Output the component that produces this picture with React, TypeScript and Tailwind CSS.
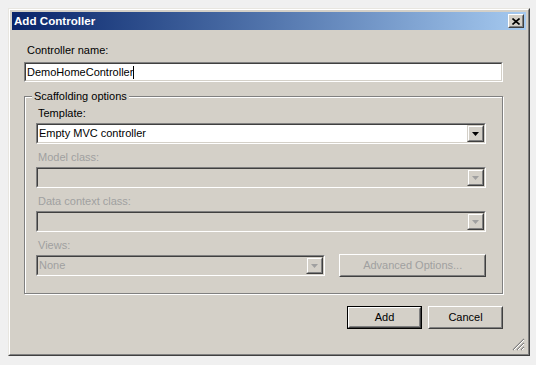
import React from "react";

const font = { fontFamily: '"Liberation Sans", Arial, sans-serif' };

function Sunken({ className, children, disabled }: { className?: string; children?: React.ReactNode; disabled?: boolean }) {
  return (
    <div className={`border border-t-[#808080] border-l-[#808080] border-b-white border-r-white ${className ?? ""}`}>
      <div className={`h-full border border-t-[#404040] border-l-[#404040] border-b-[#d4d0c8] border-r-[#d4d0c8] ${disabled ? "bg-[#d4d0c8]" : "bg-white"}`}>
        {children}
      </div>
    </div>
  );
}

function Arrow({ disabled }: { disabled?: boolean }) {
  return (
    <div className="w-[17px] h-full border border-t-[#d4d0c8] border-l-[#d4d0c8] border-b-[#404040] border-r-[#404040] bg-[#d4d0c8]">
      <div className="h-full border border-t-white border-l-white border-b-[#808080] border-r-[#808080] flex items-center justify-center">
        <svg width="7" height="4" viewBox="0 0 7 4">
          <path d="M0 0H7L3.5 4Z" fill={disabled ? "#a0a0a0" : "#000"} />
        </svg>
      </div>
    </div>
  );
}

function Combo({ text, disabled, className }: { text?: string; disabled?: boolean; className?: string }) {
  return (
    <Sunken className={className} disabled={disabled}>
      <div className="flex h-full items-stretch">
        <div className={`flex-1 flex items-center pl-[1px] text-[11px] ${disabled ? "text-[#a0a0a0]" : "text-black"}`}>{text}</div>
        <Arrow disabled={disabled} />
      </div>
    </Sunken>
  );
}

function Button({ label, def, disabled, className, children }: { label?: string; def?: boolean; disabled?: boolean; className?: string; children?: React.ReactNode }) {
  return (
    <div className={`${def ? "border border-black" : ""} ${className ?? ""}`}>
      <div className="h-full border border-t-white border-l-white border-b-[#404040] border-r-[#404040] bg-[#d4d0c8]">
        <div className={`h-full border border-t-[#d4d0c8] border-l-[#d4d0c8] border-b-[#808080] border-r-[#808080] flex items-center justify-center text-[11px] ${disabled ? "text-[#a0a0a0]" : "text-black"}`}>
          {label}
          {children}
        </div>
      </div>
    </div>
  );
}

function Label({ children, disabled, className }: { children: React.ReactNode; disabled?: boolean; className?: string }) {
  return (
    <div className={`h-[14px] leading-[14px] text-[11px] pl-[2px] ${disabled ? "text-[#a0a0a0]" : "text-black"} ${className ?? ""}`}>
      {children}
    </div>
  );
}

export default function App() {
  return (
    <div className="w-[536px] h-[365px] bg-[#f0f0f0] pt-[8px] pl-[8px]" style={font}>
      <div className="w-[522px] h-[348px] border border-t-[#e8e6e0] border-l-[#e8e6e0] border-b-[#404040] border-r-[#404040] bg-[#d4d0c8] flex flex-col">
        <div className="flex-1 border border-t-white border-l-white border-b-[#808080] border-r-[#808080] p-[2px] flex flex-col">
          <div className="h-[18px] bg-gradient-to-r from-[#0a246a] to-[#a6caf0] flex items-center justify-between pl-[2px] pr-[2px]">
            <span className="text-white font-bold text-[11.6px]">Add Controller</span>
            <Button className="w-[16px] h-[14px]">
              <svg width="8" height="7" viewBox="0 0 8 7">
                <path d="M0.5 0.5L7.5 6.5M7.5 0.5L0.5 6.5" stroke="#000" strokeWidth="1.6" />
              </svg>
            </Button>
          </div>
          <div className="relative flex-1 flex flex-col pl-[12px] pr-[23px]">
            <Label className="mt-[13px] pl-[3px]">Controller name:</Label>
            <Sunken className="mt-[5px] h-[20px]">
              <div className="h-full flex items-center pl-[1px] text-[11px] text-black">
                DemoHomeController<span className="inline-block w-[1px] h-[13px] bg-black" />
              </div>
            </Sunken>
            <div className="relative mt-[14px] h-[198px] border border-[#808080] shadow-[inset_1px_1px_0_white,1px_1px_0_white] pl-[11px] pr-[16px] flex flex-col">
              <div className="absolute -top-[8px] left-[7px] bg-[#d4d0c8] px-[2px] h-[14px] leading-[14px] text-[11px]">Scaffolding options</div>
              <Label className="mt-[9px]">Template:</Label>
              <Combo className="mt-[3px] h-[21px]" text="Empty MVC controller" />
              <Label className="mt-[6px]" disabled>Model class:</Label>
              <Combo className="mt-[3px] h-[21px]" disabled />
              <Label className="mt-[6px]" disabled>Data context class:</Label>
              <Combo className="mt-[3px] h-[21px]" disabled />
              <Label className="mt-[6px]" disabled>Views:</Label>
              <div className="mt-[2px] flex items-center">
                <Combo className="w-[290px] h-[21px]" text="None" disabled />
                <Button label="Advanced Options..." disabled className="ml-[14px] w-[147px] h-[23px]" />
              </div>
            </div>
            <div className="mt-[12px] flex justify-end gap-[6px]">
              <Button label="Add" def className="w-[75px] h-[23px]" />
              <Button label="Cancel" className="w-[75px] h-[23px]" />
            </div>
            <svg className="absolute right-[1px] bottom-[1px]" width="14" height="14" viewBox="0 0 14 14">
              <path d="M13 2L2 13M13 6L6 13M13 10L10 13" stroke="#808080" strokeWidth="1.2" />
              <path d="M13 3L3 13M13 7L7 13M13 11L11 13" stroke="#ffffff" strokeWidth="1" />
            </svg>
          </div>
        </div>
      </div>
    </div>
  );
}
